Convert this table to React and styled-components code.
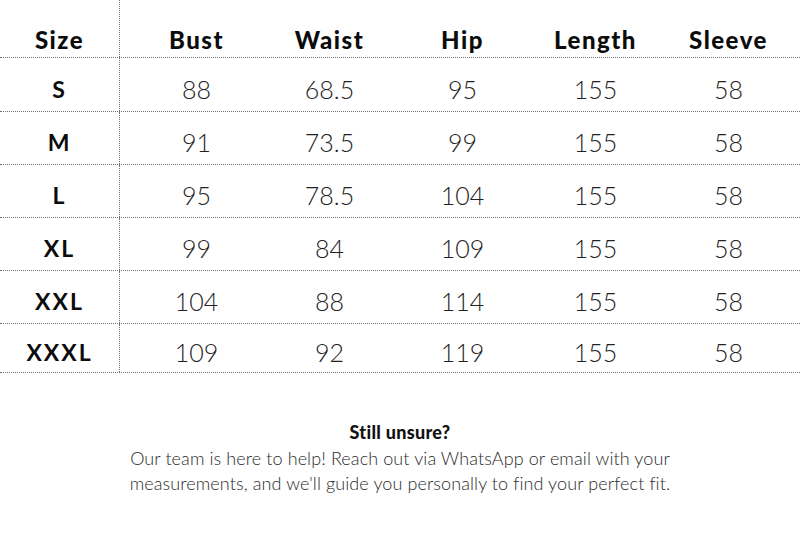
import React from "react";
import styled, { createGlobalStyle } from "styled-components";

const GlobalStyle = createGlobalStyle`
  html, body {
    margin: 0;
    padding: 0;
    background: #fff;
  }
  body {
    font-family: "Lato", "Liberation Sans", sans-serif;
    color: #111;
  }
`;

const Page = styled.div`
  width: 800px;
  height: 545px;
  background: #fff;
  overflow: hidden;
`;

const Table = styled.div`
  display: flex;
  flex-direction: column;
`;

const Row = styled.div`
  display: flex;
  height: ${(p) => p.h}px;
  border-bottom: 1px dotted #6f6f6f;
  box-sizing: border-box;
`;

const SizeCell = styled.div`
  width: 120px;
  flex: none;
  border-right: 1px dotted #6f6f6f;
  display: flex;
  align-items: center;
  justify-content: center;
  padding-top: ${(p) => p.pt}px;
  box-sizing: border-box;
  font-size: ${(p) => (p.head ? 24 : 23)}px;
  font-weight: ${(p) => (p.head ? 900 : 700)};
  letter-spacing: ${(p) => (p.head ? "1.5px" : "2px")};
  color: #0c0c0c;
`;

const Cells = styled.div`
  display: flex;
  padding-left: 10px;
`;

const Cell = styled.div`
  width: 133px;
  display: flex;
  align-items: center;
  justify-content: center;
  padding-top: ${(p) => p.pt}px;
  box-sizing: border-box;
  font-size: ${(p) => (p.head ? 24 : 25)}px;
  font-weight: ${(p) => (p.head ? 900 : 300)};
  letter-spacing: ${(p) => (p.head ? "1.5px" : "0")};
  color: ${(p) => (p.head ? "#0c0c0c" : "#222")};
`;

const Note = styled.div`
  margin-top: 47px;
  display: flex;
  flex-direction: column;
  align-items: center;
  text-align: center;
`;

const NoteTitle = styled.div`
  font-size: 18px;
  font-weight: 900;
  color: #111;
  line-height: 24px;
  letter-spacing: 0.3px;
`;

const NoteText = styled.p`
  margin: 2px 0 0;
  width: 600px;
  font-size: 18px;
  font-weight: 300;
  line-height: 25px;
  letter-spacing: 0.1px;
  color: #2a2a2a;
`;

const headers = ["Bust", "Waist", "Hip", "Length", "Sleeve"];
const rows = [
  ["S", "88", "68.5", "95", "155", "58"],
  ["M", "91", "73.5", "99", "155", "58"],
  ["L", "95", "78.5", "104", "155", "58"],
  ["XL", "99", "84", "109", "155", "58"],
  ["XXL", "104", "88", "114", "155", "58"],
  ["XXXL", "109", "92", "119", "155", "58"],
];
const heights = [54, 53, 53, 53, 53, 49];

export default function App() {
  return (
    <Page>
      <GlobalStyle />
      <Table>
        <Row h={58}>
          <SizeCell head pt={22}>Size</SizeCell>
          <Cells>
            {headers.map((h) => (
              <Cell key={h} head pt={22}>
                {h}
              </Cell>
            ))}
          </Cells>
        </Row>
        {rows.map((r, i) => (
          <Row key={r[0]} h={heights[i]}>
            <SizeCell pt={8}>{r[0]}</SizeCell>
            <Cells>
              {r.slice(1).map((v, j) => (
                <Cell key={j} pt={8}>
                  {v}
                </Cell>
              ))}
            </Cells>
          </Row>
        ))}
      </Table>
      <Note>
        <NoteTitle>Still unsure?</NoteTitle>
        <NoteText>
          Our team is here to help! Reach out via WhatsApp or email with your
          measurements, and we'll guide you personally to find your perfect fit.
        </NoteText>
      </Note>
    </Page>
  );
}
